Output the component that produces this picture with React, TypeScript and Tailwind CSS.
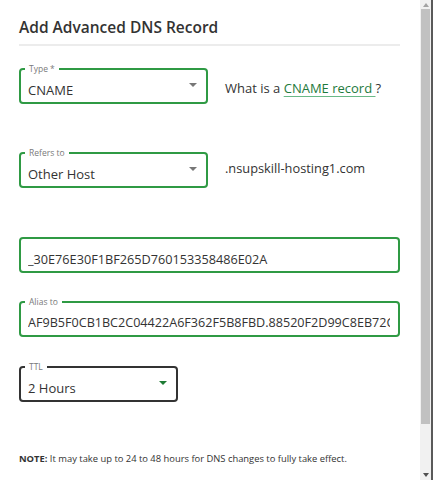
import React from "react";

const GREEN = "border-[#2f9a44]";

function Caret({ className }: { className: string }) {
  return (
    <svg width="8" height="4" viewBox="0 0 8 4" className={className}>
      <path d="M0 0 L8 0 L4 4 Z" fill="currentColor" />
    </svg>
  );
}

function Field({
  label,
  value,
  width,
  border,
  caret,
  caretColor,
  textSize = "text-[13px]",
}: {
  label?: string;
  value: string;
  width: string;
  border: string;
  caret?: boolean;
  caretColor?: string;
  textSize?: string;
}) {
  return (
    <div className={`relative h-[36px] ${width} rounded-[4px] border-2 ${border} flex items-end pb-[3px] pl-[7px] pr-[8px]`}>
      {label && (
        <span className="absolute left-[4px] top-[-7px] bg-white px-[4px] text-[8.5px] leading-[12px] text-[#7a7a7a]">
          {label}
        </span>
      )}
      <span className={`min-w-0 flex-1 overflow-hidden whitespace-nowrap ${textSize} leading-[18px] text-[#333]`}>
        {value}
      </span>
      {caret && <Caret className={`${caretColor} mb-[12px] mr-[1px] shrink-0`} />}
    </div>
  );
}

export default function App() {
  return (
    <div
      className="flex h-[480px] w-[433px] overflow-hidden bg-white"
      style={{ fontFamily: '"Open Sans", "Noto Sans", sans-serif' }}
    >
      <div className="min-w-0 flex-1 pl-[19px] pr-[20px] pt-[15px]">
        <h1 className="text-[15.5px] font-semibold leading-[24px] text-[#333]">Add Advanced DNS Record</h1>
        <div className="mt-[5px] h-[2px] bg-[#ececec]" />

        <div className="mt-[22px] flex items-center">
          <Field label="Type *" value="CNAME" width="w-[189px]" border={GREEN} caret caretColor="text-[#777]" />
          <div className="ml-[17px] pt-[6px] text-[13px] text-[#333]">
            What is a{" "}
            <span className="text-[#1e7a3c] underline decoration-[#69b987] underline-offset-[3px]">CNAME record </span>?
          </div>
        </div>

        <div className="mt-[48px] flex items-center">
          <Field label="Refers to" value="Other Host" width="w-[189px]" border={GREEN} caret caretColor="text-[#777]" />
          <div className="ml-[17px] pb-[3px] text-[12.8px] text-[#333]">.nsupskill-hosting1.com</div>
        </div>

        <div className="mt-[49px]">
          <Field value="_30E76E30F1BF265D760153358486E02A" width="w-full" border={GREEN} textSize="text-[12.7px]" />
        </div>

        <div className="mt-[28px]">
          <Field label="Alias to" value="AF9B5F0CB1BC2C04422A6F362F5B8FBD.88520F2D99C8EB72C3A0D6B1F2.comodoca.com" width="w-full" border={GREEN} textSize="text-[12.6px]" />
        </div>

        <div className="mt-[29px]">
          <Field label="TTL" value="2 Hours" width="w-[159px]" border="border-[#333]" caret caretColor="text-[#1e7b34]" />
        </div>

        <p className="mt-[51px] text-[9.4px] leading-[12px] text-[#333]">
          <span className="font-bold">NOTE:</span> It may take up to 24 to 48 hours for DNS changes to fully take effect.
        </p>
      </div>

      <div className="flex h-full w-[13px] shrink-0 flex-col border-r-2 border-[#5a5a5a] bg-[#f1f1f1]">
        <div className="flex h-[9px] items-center justify-center">
          <svg width="6" height="4" viewBox="0 0 6 4"><path d="M0 4 L6 4 L3 0 Z" fill="#a3a3a3" /></svg>
        </div>
        <div className="mx-[1px] h-[415px] bg-[#c1c1c1]" />
        <div className="flex-1" />
        <div className="flex h-[10px] items-center justify-center">
          <svg width="6" height="4" viewBox="0 0 6 4"><path d="M0 0 L6 0 L3 4 Z" fill="#505050" /></svg>
        </div>
      </div>
    </div>
  );
}
